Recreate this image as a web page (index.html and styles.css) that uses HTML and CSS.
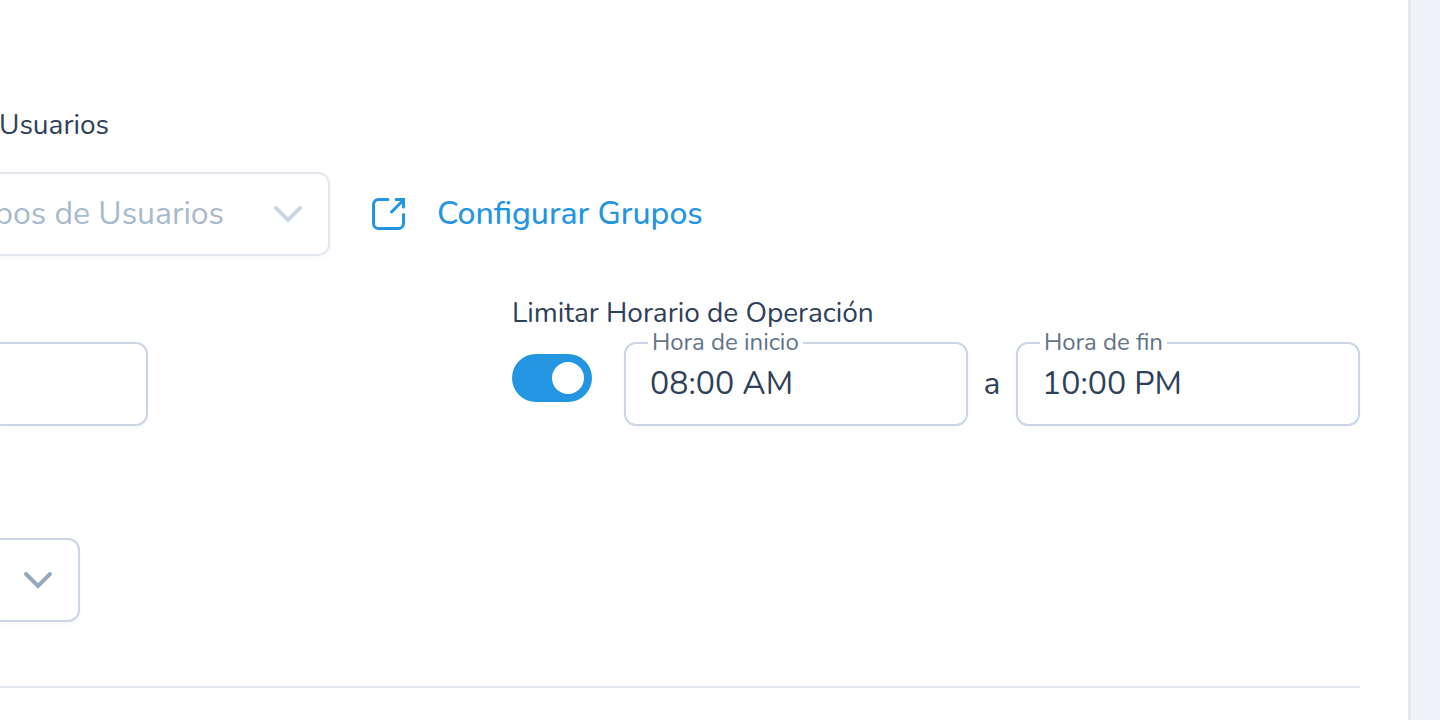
FILE: index.html
```html
<!DOCTYPE html>
<html lang="es">
<head>
    <meta charset="utf-8">
    <title>Configuración de Usuarios</title>
    <link rel="stylesheet" href="styles.css">
</head>
<body>
    <main class="card">
        <section class="groups">
            <label class="title" for="groups">Usuarios</label>
            <div class="groups-row">
                <div class="select-box groups-box">
                    <select id="groups" class="select groups-select" disabled>
                        <option>pos de Usuarios</option>
                    </select>
                    <svg class="chevron light" viewBox="0 0 32 20"><path d="M4 4l12 12L28 4"/></svg>
                </div>
                <a class="config-link" href="#">
                    <svg class="link-icon" viewBox="0 0 36 36">
                        <path d="M18 3.500H8.500a5 5 0 0 0-5 5v19a5 5 0 0 0 5 5h20a5 5 0 0 0 5-5V18.500"/>
                        <path d="M21.500 16L33 4.500M26 3.500h7.500v7.500"/>
                    </svg>
                    <span>Configurar Grupos</span>
                </a>
            </div>
        </section>

        <section class="schedule">
            <input class="input short-input" type="text" aria-label="Valor">
            <div class="hours">
                <label class="title" for="limit">Limitar Horario de Operación</label>
                <div class="hours-row">
                    <input class="switch" type="checkbox" id="limit" checked>
                    <div class="field">
                        <label for="start">Hora de inicio</label>
                        <input class="input" type="text" id="start" value="08:00 AM">
                    </div>
                    <span class="to">a</span>
                    <div class="field">
                        <label for="end">Hora de fin</label>
                        <input class="input" type="text" id="end" value="10:00 PM">
                    </div>
                </div>
            </div>
        </section>

        <section class="options">
            <div class="select-box">
                <select class="select small-select" aria-label="Opciones">
                    <option></option>
                </select>
                <svg class="chevron" viewBox="0 0 32 20"><path d="M4 4l12 12L28 4"/></svg>
            </div>
        </section>
        <hr>
    </main>
</body>
</html>
```
FILE: styles.css
```css
* { box-sizing: border-box; }
body { margin: 0; background: #eff3f8; color: #2f4159; font-family: Nunito, Lato, sans-serif; font-size: 32px; }
.card { margin-right: 29px; padding: 107px 48px 0 0; min-height: 100vh; background: #fff; border-right: 3px solid #e3e8f0; overflow: hidden; }
.title { display: block; font-size: 28px; line-height: 36px; }

/* user groups */
.groups .title { margin-left: -1px; }
.groups-row { display: flex; align-items: center; gap: 40px; margin-top: 29px; }
.select-box { position: relative; display: inline-block; }
.groups-box { margin-left: -8px; }
.select, .input { display: block; height: 84px; margin: 0; background: #fff; border: 2px solid #cbd5e3; border-radius: 12px; box-shadow: 0 2px 4px rgba(0, 0, 0, 0.03); color: inherit; font: inherit; }
.select { appearance: none; border-left: 0; border-top-left-radius: 0; border-bottom-left-radius: 0; }
.groups-select { width: 338px; padding: 0 104px 2px 0; border-color: #e3e8f0; color: #a8bace; opacity: 1; text-align-last: right; }
.small-select { width: 80px; }
.chevron { position: absolute; top: 32px; right: 26px; width: 32px; height: 20px; fill: none; stroke: #94a8be; stroke-width: 4; stroke-linecap: round; pointer-events: none; }
.chevron.light { stroke: #cbd5e3; }
.config-link { display: flex; align-items: center; gap: 31px; color: #2495e1; text-decoration: none; font-weight: 500; }
.config-link span { padding-bottom: 2px; }
.link-icon { width: 36px; height: 36px; fill: none; stroke: currentColor; stroke-width: 3; stroke-linecap: round; }

/* schedule */
.schedule { display: flex; align-items: flex-end; margin-top: 39px; }
.short-input { width: 148px; margin-right: 364px; border-left: 0; border-top-left-radius: 0; border-bottom-left-radius: 0; }
.hours { flex: 1; min-width: 0; }
.hours-row { display: flex; align-items: center; margin-top: 11px; }
.switch { position: relative; flex: none; appearance: none; width: 80px; height: 48px; margin: 0 32px 12px 0; border-radius: 24px; background: #2495e1; cursor: pointer; }
.switch::before { content: ""; position: absolute; top: 8px; left: 8px; width: 32px; height: 32px; border-radius: 50%; background: #fff; }
.switch:checked::before { left: 40px; }
.field { position: relative; flex: 1; min-width: 0; }
.field .input { width: 100%; padding: 0 24px 2px; }
.field label { position: absolute; top: -12px; left: 24px; padding: 0 4px; background: #fff; color: #62748a; font-size: 24px; line-height: 24px; }
.to { width: 48px; text-align: center; line-height: 40px; }

.options { margin-top: 112px; }
.options .select-box { display: block; width: 80px; }
hr { margin: 64px 0 0; border: 0; border-top: 2px solid #e3e8f0; }
```
